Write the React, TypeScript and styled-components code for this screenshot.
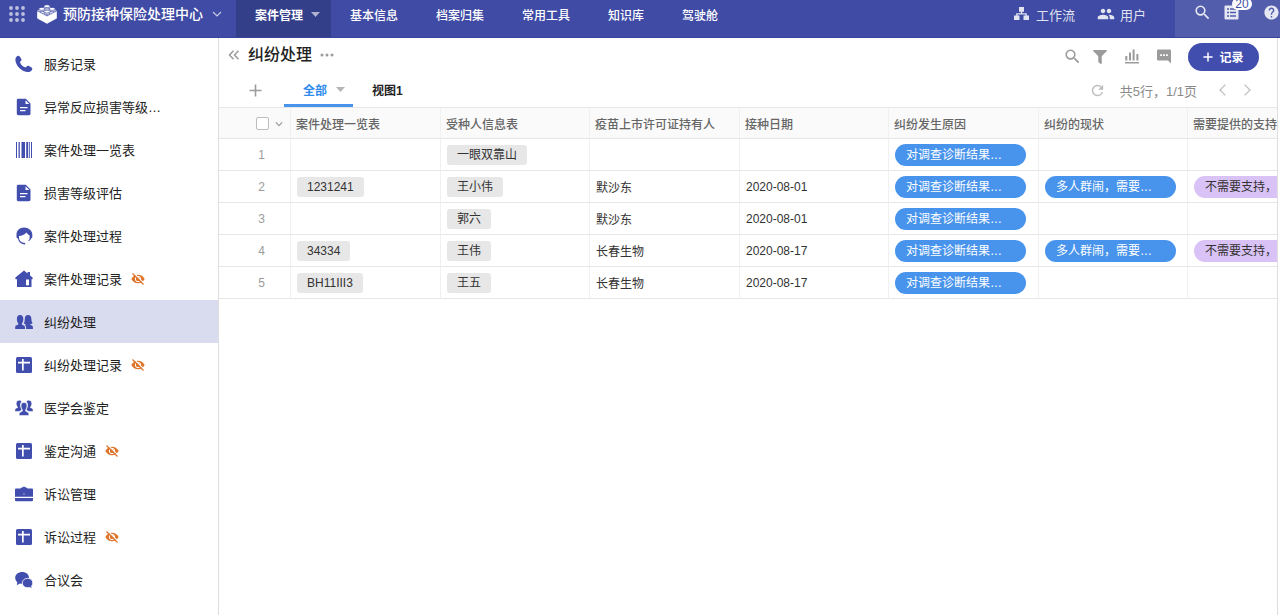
import React from "react";
import styled, { createGlobalStyle, css } from "styled-components";
import { FaFilter, FaPhoneAlt } from "react-icons/fa";
import { MdSearch, MdPeople, MdHelp, MdRefresh } from "react-icons/md";

const color = {
  brand: "#3f4ba4",
  brandDark: "#343f8a",
  brandLight: "#525dac",
  icon: "#414eae",
  blue: "#4894ec",
  line: "#e6e6e6",
  softLine: "#f0f0f0",
  grey: "#9b9b9b",
  orange: "#df742b",
};

const GlobalStyle = createGlobalStyle`
  * { box-sizing: border-box; }
  body {
    margin: 0;
    background: #fff;
    color: #222;
    font-family: "Liberation Sans", "Noto Sans CJK SC", sans-serif;
    font-size: 12px;
  }
  button { font: inherit; border: 0; padding: 0; background: none; color: inherit; cursor: pointer; }
  a { color: inherit; text-decoration: none; }
  svg { display: block; flex: none; }
`;

/* ---------- icons ---------- */

const AppsIcon = () => (
  <svg width="16" height="16" viewBox="0 0 16 16" fill="currentColor">
    {[2, 8, 14].map((y) => [2, 8, 14].map((x) => <circle key={`${x}-${y}`} cx={x} cy={y} r="1.9" />))}
  </svg>
);

const BrickIcon = () => (
  <svg width="20" height="20" viewBox="0 0 20 20">
    <path d="M10 1.600 19.600 6.400 10 11.400.4 6.400Z" fill="#fff" />
    <path d="M.4 7.600 10 12.600l9.600-5v6.600L10 19.400.4 14.200Z" fill="#fff" stroke="#fff" strokeWidth=".6" strokeLinejoin="round" />
    <g fill="#fff" stroke={color.brand} strokeWidth=".7">
      {[
        [10, 2.2],
        [4.8, 4.9],
        [15.2, 4.9],
        [10, 7.6],
      ].map(([x, y]) => (
        <g key={`${x}-${y}`}>
          <path d={`M${x - 3} ${y}v1.300a3 1.500 0 0 0 6 0V${y}`} />
          <ellipse cx={x} cy={y} rx="3" ry="1.500" />
        </g>
      ))}
    </g>
  </svg>
);

const ChevronIcon = ({ size = 10, d = "M1 3l4 4 4-4", width = 1.2 }: { size?: number; d?: string; width?: number }) => (
  <svg width={size} height={size} viewBox="0 0 10 10" fill="none" stroke="currentColor" strokeWidth={width}>
    <path d={d} />
  </svg>
);

const CaretIcon = () => (
  <svg width="9" height="5" viewBox="0 0 9 5" fill="currentColor">
    <path d="M0 0h9L4.500 5Z" />
  </svg>
);

const WorkflowIcon = () => (
  <svg width="15" height="14" viewBox="0 0 15 14" fill="currentColor">
    <path d="M5 0h5v4.800H8.200v1.400h4.600v2.400H15V13H9.500V8.600h2V7.400h-8v1.200h2V13H0V8.600h2.200V6.200h4.600V4.800H5Z" />
  </svg>
);

const TodoIcon = () => (
  <svg width="15" height="15" viewBox="0 0 15 15">
    <rect x=".5" y=".5" width="14" height="14" rx="1" fill="currentColor" />
    <path d="M3 4h2M6 4h6M3 7.500h2M6 7.500h6M3 11h2M6 11h6" stroke={color.brandLight} strokeWidth="1.400" />
  </svg>
);

const CollapseIcon = () => (
  <svg width="12" height="10" viewBox="0 0 12 10" fill="none" stroke="currentColor" strokeWidth="1.500">
    <path d="M5.500 .8 1.500 5l4 4.200M10.500.8 6.500 5l4 4.200" />
  </svg>
);

const MoreIcon = () => (
  <svg width="14" height="4" viewBox="0 0 14 4" fill="currentColor">
    <circle cx="2" cy="2" r="1.500" />
    <circle cx="7" cy="2" r="1.500" />
    <circle cx="12" cy="2" r="1.500" />
  </svg>
);

const PlusIcon = ({ size, width }: { size: number; width: number }) => (
  <svg width={size} height={size} viewBox="0 0 12 12" fill="none" stroke="currentColor" strokeWidth={width}>
    <path d="M6 .5v11M.5 6h11" />
  </svg>
);

const ChartIcon = () => (
  <svg width="16" height="16" viewBox="0 0 16 16" fill="currentColor">
    <path d="M1 13h14v1.600H1ZM1.300 7h2v4.500h-2ZM5 3.500h2v8H5ZM8.600.6h2v10.900h-2ZM12.400 5h2v6.500h-2Z" />
  </svg>
);

const CommentIcon = () => (
  <svg width="16" height="16" viewBox="0 0 16 16">
    <path d="M2 .6h12a1 1 0 0 1 1 1v13l-3-3H2a1 1 0 0 1-1-1v-9a1 1 0 0 1 1-1Z" fill="currentColor" />
    <path d="M4.200 5.300H6v1.600H4.200ZM7.100 5.300h1.800v1.600H7.100ZM10 5.300h1.800v1.600H10Z" fill="#fff" />
  </svg>
);

const HiddenIcon = () => (
  <svg width="14" height="14" viewBox="0 0 14 14" fill="none">
    <path d="M.3 7C1.800 4.200 4.200 2.700 7 2.700s5.200 1.500 6.700 4.300C12.200 9.800 9.800 11.300 7 11.300S1.800 9.800.3 7Z" fill={color.orange} />
    <circle cx="7" cy="7" r="2.700" stroke="#fff" strokeWidth="1" />
    <path d="M2.600 .8 13.400 11.600" stroke="#fff" strokeWidth="1.200" />
    <path d="M1.500 1.500 12.500 12.500" stroke={color.orange} strokeWidth="1.300" />
  </svg>
);

const Glyph = ({ children }: { children: React.ReactNode }) => (
  <svg width="18" height="18" viewBox="0 0 18 18" fill="currentColor">
    {children}
  </svg>
);

const CallIcon = () => (
  <Glyph>
    <path d="M1.700 1.600C2.700.4 4 .3 4.700 1.400l1.500 2.300c.6.900.4 1.900-.5 2.500l-.8.6c.4 1.500 1 2.700 2 3.700 1.200 1.100 2.500 1.800 4 2.100l.5-.8c.6-.9 1.600-1.200 2.500-.7l2.600 1.400c1.100.6 1.100 1.900.1 2.900-1.300 1.400-3.300 1.900-5.500 1.400-2.700-.6-5.200-2.100-7.200-4.300C1.900 10.400.7 7.900.4 5.200.3 3.800.7 2.600 1.700 1.600Z" />
  </Glyph>
);

const FileIcon = () => (
  <Glyph>
    <path d="M3.200.8h7.600l4.700 4.700v10.300a1.400 1.400 0 0 1-1.400 1.400H3.200a1.400 1.400 0 0 1-1.400-1.400V2.200A1.400 1.400 0 0 1 3.200.8Z" />
    <path d="M10.500 2.200v3.800h3.800ZM5 9h7.500v1.300H5ZM5 12h5.500v1.300H5Z" fill="#fff" />
  </Glyph>
);

const BarcodeIcon = () => (
  <Glyph>
    <path d="M1 1h1v16H1ZM3.500 1h1.300v16H3.500ZM6.500 1h3.500v16H6.500ZM11.200 1h2v16h-2ZM14 1h.8v16H14ZM16 1h1v16h-1Z" />
  </Glyph>
);

const ServiceIcon = () => (
  <Glyph>
    <path d="M9 .5C4.700.5 1.500 3.500 1.500 7.300v3.200c.5.700 1 1 1.500 1 .3 2.900 2.500 5.200 5.300 5.800.9.200 2 .2 2-.6s-.7-1-1.600-1c-2.900-.3-4.700-2.500-4.700-5.300V9c2.600-.2 5.600-1.600 7.500-3.600.9 1.400 2 2.400 3.100 2.800v2.500c0 1.500-.7 2.700-1.700 3.600 1.600-.5 2.800-1.600 3.200-2.900.5-.2.900-.5 1.200-1V7.300C17.300 3.500 13.300.5 9 .5Z" />
  </Glyph>
);

const HouseIcon = () => (
  <Glyph>
    <path d="M9 .5 12.600 3.500V2h2.400v3.400l2.600 2.200v1.700h-1.100v7.700H2V9.300H.4V7.600Z" />
    <path d="M11 9.500h3v5.800h-3Z" fill="#fff" />
  </Glyph>
);

const PeopleIcon = () => (
  <Glyph>
    <path d="M5 2C7.300 2 8.300 3.500 8.300 6c0 1.900-.5 3.300-1.400 4.400v1.200l2.300 1.200c.6.400.8.900.8 1.600V16H.2v-2c0-.7.300-1.100.9-1.400L3.300 11.600v-1.200C2.400 9.300 1.900 7.900 1.900 6 1.900 3.500 3 2 5 2Z" />
    <path d="M13 2c2.300 0 3.300 1.600 3.400 4 0 1.500.4 3.200 1.200 4.300-.9.600-1.600.9-2.400.9v.5l2 1.100c.5.300.7.700.7 1.300V16h-6.800v-1.800c0-1-.5-1.700-1.400-2.200l1.100-.5v-.4c-.8 0-1.400-.3-2-.7.700-1.200 1-2.600 1-4.400C9.800 3.600 10.900 2 13 2Z" />
  </Glyph>
);

const GroupIcon = () => (
  <Glyph>
    <path d="M4.300 1.500c1.100 0 1.800.4 2.200 1.200C5.300 3.600 5 5 5.200 6.800c.1 1.600.6 2.900 1.300 3.900l-2.200 1.500H.2v-1.300c0-.7.300-1 .9-1.300l1.700-.8v-.9C1.900 7.100 1.500 6 1.500 4.500c0-1.900.9-3 2.800-3ZM13.700 1.500c-1.100 0-1.800.4-2.200 1.200 1.200.9 1.500 2.300 1.300 4.100-.1 1.600-.6 2.900-1.300 3.900l2.200 1.500h4.100v-1.300c0-.7-.3-1-.9-1.300l-1.700-.8v-.9c.9-.8 1.300-1.900 1.300-3.400 0-1.900-.9-3-2.800-3Z" />
    <path d="M9 3.500c2 0 2.900 1.200 2.900 3.200 0 1.700-.4 3-1.300 4v1.400l2.400 1.300c.6.300.8.700.8 1.300V16.500H4.200v-1.800c0-.6.200-1 .8-1.300l2.400-1.300v-1.400c-.9-1-1.300-2.300-1.300-4 0-2 .9-3.200 2.900-3.200Z" stroke="#fff" strokeWidth=".5" />
  </Glyph>
);

const TableIcon = () => (
  <Glyph>
    <rect x="1" y="1" width="16" height="16" rx="1.500" />
    <path d="M3 5.800h12v1.700H3ZM7 3h1.700v11.500H7Z" fill="#fff" />
  </Glyph>
);

const BriefcaseIcon = () => (
  <Glyph>
    <path d="M5.500 3.500C5.800 2.600 6.600 2.400 7.500 2.400L8 1.800h2l.5.600c.9 0 1.700.2 2 1.100H17a1 1 0 0 1 1 1v7.200H0V4.500a1 1 0 0 1 1-1ZM0 12.900h18v2.300a1 1 0 0 1-1 1H1a1 1 0 0 1-1-1Z" />
    <path d="M8.500 8.500h1v1h-1Z" fill="#fff" />
  </Glyph>
);

const ChatIcon = () => (
  <Glyph>
    <path d="M7.200 1C11 1 14 3.400 14 6.800s-3 5.900-6.800 5.900c-.9 0-1.700-.1-2.400-.3L1.800 14.200l.5-3C1 10.100.2 8.600.2 6.800.2 3.400 3.400 1 7.200 1Z" />
    <path d="M12.600 7.300c3 0 5.200 1.900 5.200 4.700 0 1.300-.5 2.400-1.300 3.200l.6 2.400-2.600-1.200c-.6.200-1.200.3-1.900.3-3 0-5.300-2-5.300-4.700s2.300-4.700 5.300-4.700Z" stroke="#fff" strokeWidth=".8" />
  </Glyph>
);

/* ---------- top bar ---------- */

const Page = styled.div`
  display: flex;
  flex-direction: column;
  min-height: 100vh;
`;

const TopBar = styled.header`
  display: flex;
  height: 38px;
  background: ${color.brand};
  border-bottom: 1px solid #38439c;
  color: rgba(255, 255, 255, 0.85);
`;

const Brand = styled.div`
  display: flex;
  align-items: center;
  width: 236px;
  padding: 0 0 9px 9px;
`;

const AppsButton = styled.button`
  margin-right: 12px;
  color: rgba(255, 255, 255, 0.65);
`;

const BrandButton = styled.button`
  display: flex;
  align-items: center;
  gap: 6px;
  color: #fff;
  font-size: 14px;
  font-weight: 500;
  line-height: 20px;
  white-space: nowrap;

  svg:last-child {
    margin-left: 3px;
    color: rgba(255, 255, 255, 0.7);
  }
`;

const Nav = styled.nav`
  display: flex;
  flex: 1;
`;

const NavLink = styled.a<{ $active?: boolean }>`
  display: flex;
  align-items: center;
  gap: 8px;
  padding: 0 19px 9px;
  color: #fff;
  font-weight: 500;
  white-space: nowrap;

  ${(p) =>
    p.$active &&
    css`
      padding-right: 11px;
      background: ${color.brandDark};
      font-weight: 700;

      svg {
        color: rgba(255, 255, 255, 0.6);
      }
    `}
`;

const AdminLinks = styled.div`
  display: flex;
  gap: 22px;
  padding: 0 29px 9px 0;
`;

const AdminLink = styled.a`
  display: flex;
  align-items: center;
  gap: 5px;
  font-size: 13px;
  white-space: nowrap;

  &:first-child {
    gap: 7px;
  }
`;

const Tools = styled.div`
  display: flex;
  align-items: center;
  gap: 11px;
  width: 105px;
  padding: 0 0 12px 18px;
  background: ${color.brandLight};
`;

const ToolButton = styled.button`
  position: relative;
  display: flex;
  justify-content: center;
  flex: none;
  width: 18px;

  & + & + & {
    margin-left: 11px;
  }
`;

const Badge = styled.span`
  position: absolute;
  top: -7px;
  left: 10px;
  width: 20px;
  height: 12px;
  border-radius: 6px;
  background: #fff;
  color: ${color.brand};
  font-size: 12px;
  line-height: 12px;
  text-align: center;
`;

/* ---------- sidebar ---------- */

const Body = styled.div`
  display: flex;
  flex: 1;
`;

const Sidebar = styled.nav`
  flex: none;
  width: 219px;
  padding-top: 4px;
  border-right: 1px solid #dedede;
`;

const SideLink = styled.a<{ $active?: boolean }>`
  display: flex;
  align-items: center;
  height: 43px;
  padding-left: 15px;
  background: ${(p) => (p.$active ? "#d9dbef" : "transparent")};
  color: ${color.icon};
  font-size: 13px;
`;

const SideText = styled.span`
  margin: 0 9px 0 11px;
  color: #222;
`;

/* ---------- sheet ---------- */

const Main = styled.main`
  flex: 1;
  min-width: 0;
  margin-right: 2px;
  border-right: 1px solid #dedede;
`;

const TitleBar = styled.div`
  display: flex;
  justify-content: space-between;
  height: 37px;
  padding: 0 18px 0 9px;
  color: ${color.grey};
`;

const Heading = styled.div`
  display: flex;
  align-items: center;
  padding-bottom: 3px;
`;

const Title = styled.h1`
  margin: 0 8px;
  color: #222;
  font-size: 16px;
  font-weight: 500;
  line-height: 24px;
`;

const Actions = styled.div`
  display: flex;
  align-items: center;
  gap: 16px;
`;

const ActionButton = styled.button`
  display: flex;
  justify-content: center;
  width: 16px;

  &:first-child {
    margin-right: -4px;
  }
`;

const AddButton = styled.button`
  display: flex;
  align-items: center;
  justify-content: center;
  gap: 6px;
  width: 71px;
  height: 28px;
  border-radius: 14px;
  background: ${color.icon};
  color: #fff;
  font-weight: 700;
`;

const TabBar = styled.div`
  display: flex;
  height: 33px;
  padding: 0 24px 0 30px;
  border-bottom: 1px solid ${color.line};
`;

const AddView = styled.button`
  display: flex;
  align-items: center;
  width: 35px;
  padding-bottom: 2px;
  color: ${color.grey};
`;

const ViewTab = styled.button<{ $active?: boolean }>`
  display: flex;
  align-items: center;
  gap: 9px;
  padding: ${(p) => (p.$active ? "0 8px 0 19px" : "0 19px")};
  border-bottom: 3px solid ${(p) => (p.$active ? color.blue : "transparent")};
  color: ${(p) => (p.$active ? "#2f8bee" : "#222")};
  font-weight: 700;

  svg {
    color: #b5b5b5;
  }
`;

const Pager = styled.div`
  display: flex;
  align-items: center;
  margin-left: auto;
  padding-bottom: 2px;
  color: #8a8a8a;
  font-size: 13px;
`;

const PagerText = styled.span`
  margin: 0 20px 0 14px;
`;

const PagerButton = styled.button`
  color: #bdbdbd;

  & + & {
    margin-left: 12px;
  }
`;

const TableWrap = styled.div`
  overflow: hidden;
`;

const Table = styled.table`
  table-layout: fixed;
  width: 0;
  border-collapse: separate;
  border-spacing: 0;
`;

const HeadCell = styled.th`
  height: 31px;
  padding: 1px 5px 0;
  border-right: 1px solid ${color.softLine};
  border-bottom: 1px solid ${color.line};
  background: #fafafa;
  color: #666;
  font-weight: 500;
  text-align: left;
  white-space: nowrap;
`;

const SelectAll = styled.div`
  display: flex;
  align-items: center;
  gap: 6px;
  padding-left: 32px;
  color: ${color.grey};
`;

const Checkbox = styled.input`
  appearance: none;
  width: 13px;
  height: 13px;
  margin: 0;
  border: 1px solid #bdbdbd;
  border-radius: 2px;
  background: #fff;
`;

const Cell = styled.td`
  height: 32px;
  padding: 0 6px;
  border-right: 1px solid ${color.softLine};
  border-bottom: 1px solid ${color.line};
  color: #333;
  white-space: nowrap;
`;

const NumberCell = styled(Cell)`
  padding: 0 0 0 14px;
  color: ${color.grey};
  text-align: center;
`;

const Tag = styled.span`
  display: inline-block;
  padding: 0 10px;
  border-radius: 3px;
  background: #e7e7e7;
  line-height: 20px;
  vertical-align: middle;
`;

const Option = styled.span<{ $tone: "blue" | "purple" }>`
  display: block;
  width: 131px;
  padding: 0 11px;
  border-radius: 11px;
  background: ${(p) => (p.$tone === "blue" ? color.blue : "#d9c2f5")};
  color: ${(p) => (p.$tone === "blue" ? "#fff" : "#333")};
  line-height: 22px;
  overflow: hidden;
`;

/* ---------- data ---------- */

const navItems = ["基本信息", "档案归集", "常用工具", "知识库", "驾驶舱"];

const sideItems: { label: string; icon: React.ReactNode; hidden?: boolean; active?: boolean }[] = [
  { label: "服务记录", icon: <CallIcon /> },
  { label: "异常反应损害等级…", icon: <FileIcon /> },
  { label: "案件处理一览表", icon: <BarcodeIcon /> },
  { label: "损害等级评估", icon: <FileIcon /> },
  { label: "案件处理过程", icon: <ServiceIcon /> },
  { label: "案件处理记录", icon: <HouseIcon />, hidden: true },
  { label: "纠纷处理", icon: <PeopleIcon />, active: true },
  { label: "纠纷处理记录", icon: <TableIcon />, hidden: true },
  { label: "医学会鉴定", icon: <GroupIcon /> },
  { label: "鉴定沟通", icon: <TableIcon />, hidden: true },
  { label: "诉讼管理", icon: <BriefcaseIcon /> },
  { label: "诉讼过程", icon: <TableIcon />, hidden: true },
  { label: "合议会", icon: <ChatIcon /> },
];

const columns = [
  { name: "案件处理一览表", width: 150 },
  { name: "受种人信息表", width: 149 },
  { name: "疫苗上市许可证持有人", width: 150 },
  { name: "接种日期", width: 149 },
  { name: "纠纷发生原因", width: 150 },
  { name: "纠纷的现状", width: 149 },
  { name: "需要提供的支持", width: 150 },
];

const reason = "对调查诊断结果…";
const status = "多人群闹，需要…";
const support = "不需要支持，";

const records = [
  { person: "一眼双靠山" },
  { file: "1231241", person: "王小伟", holder: "默沙东", date: "2020-08-01", status, support },
  { person: "郭六", holder: "默沙东", date: "2020-08-01" },
  { file: "34334", person: "王伟", holder: "长春生物", date: "2020-08-17", status, support },
  { file: "BH11III3", person: "王五", holder: "长春生物", date: "2020-08-17" },
];

export default function App() {
  return (
    <Page>
      <GlobalStyle />
      <TopBar>
        <Brand>
          <AppsButton aria-label="应用">
            <AppsIcon />
          </AppsButton>
          <BrandButton>
            <BrickIcon />
            预防接种保险处理中心
            <ChevronIcon />
          </BrandButton>
        </Brand>
        <Nav>
          <NavLink href="#" $active>
            案件管理
            <CaretIcon />
          </NavLink>
          {navItems.map((item) => (
            <NavLink href="#" key={item}>
              {item}
            </NavLink>
          ))}
        </Nav>
        <AdminLinks>
          <AdminLink href="#">
            <WorkflowIcon />
            工作流
          </AdminLink>
          <AdminLink href="#">
            <MdPeople size={18} />
            用户
          </AdminLink>
        </AdminLinks>
        <Tools>
          <ToolButton aria-label="搜索">
            <MdSearch size={19} />
          </ToolButton>
          <ToolButton aria-label="待办">
            <TodoIcon />
            <Badge>20</Badge>
          </ToolButton>
          <ToolButton aria-label="帮助">
            <MdHelp size={17} />
          </ToolButton>
        </Tools>
      </TopBar>
      <Body>
        <Sidebar>
          {sideItems.map((item) => (
            <SideLink href="#" key={item.label} $active={item.active}>
              {item.icon}
              <SideText>{item.label}</SideText>
              {item.hidden && <HiddenIcon />}
            </SideLink>
          ))}
        </Sidebar>
        <Main>
          <TitleBar>
            <Heading>
              <button aria-label="收起">
                <CollapseIcon />
              </button>
              <Title>纠纷处理</Title>
              <button aria-label="更多">
                <MoreIcon />
              </button>
            </Heading>
            <Actions>
              <ActionButton aria-label="搜索">
                <MdSearch size={19} />
              </ActionButton>
              <ActionButton aria-label="筛选">
                <FaFilter size={14} />
              </ActionButton>
              <ActionButton aria-label="统计">
                <ChartIcon />
              </ActionButton>
              <ActionButton aria-label="讨论">
                <CommentIcon />
              </ActionButton>
              <AddButton>
                <PlusIcon size={10} width={1.8} />
                记录
              </AddButton>
            </Actions>
          </TitleBar>
          <TabBar>
            <AddView aria-label="添加视图">
              <PlusIcon size={13} width={1.5} />
            </AddView>
            <ViewTab $active>
              全部
              <CaretIcon />
            </ViewTab>
            <ViewTab>视图1</ViewTab>
            <Pager>
              <PagerButton aria-label="刷新">
                <MdRefresh size={17} />
              </PagerButton>
              <PagerText>共5行，1/1页</PagerText>
              <PagerButton aria-label="上一页">
                <ChevronIcon size={12} d="M7 .5 2.500 5 7 9.500" width={1} />
              </PagerButton>
              <PagerButton aria-label="下一页">
                <ChevronIcon size={12} d="M3 .5 7.500 5 3 9.500" width={1} />
              </PagerButton>
            </Pager>
          </TabBar>
          <TableWrap>
            <Table>
              <colgroup>
                <col width={72} />
                {columns.map((c) => (
                  <col key={c.name} width={c.width} />
                ))}
              </colgroup>
              <thead>
                <tr>
                  <HeadCell>
                    <SelectAll>
                      <Checkbox type="checkbox" aria-label="全选" />
                      <ChevronIcon size={8} width={1.5} />
                    </SelectAll>
                  </HeadCell>
                  {columns.map((c) => (
                    <HeadCell key={c.name}>{c.name}</HeadCell>
                  ))}
                </tr>
              </thead>
              <tbody>
                {records.map((r, i) => (
                  <tr key={i}>
                    <NumberCell>{i + 1}</NumberCell>
                    <Cell>{r.file && <Tag>{r.file}</Tag>}</Cell>
                    <Cell>
                      <Tag>{r.person}</Tag>
                    </Cell>
                    <Cell>{r.holder}</Cell>
                    <Cell>{r.date}</Cell>
                    <Cell>
                      <Option $tone="blue">{reason}</Option>
                    </Cell>
                    <Cell>{r.status && <Option $tone="blue">{r.status}</Option>}</Cell>
                    <Cell>{r.support && <Option $tone="purple">{r.support}</Option>}</Cell>
                  </tr>
                ))}
              </tbody>
            </Table>
          </TableWrap>
        </Main>
      </Body>
    </Page>
  );
}
